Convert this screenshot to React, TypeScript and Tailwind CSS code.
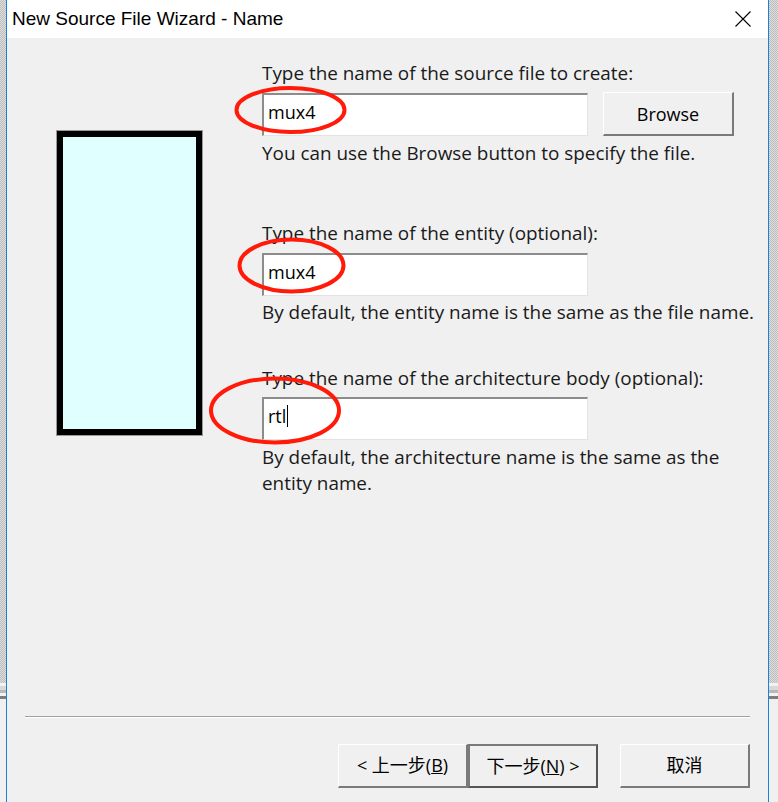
import React from "react";

const font = { fontFamily: '"Open Sans", "Noto Sans CJK SC", sans-serif' };
const titleFont = { fontFamily: '"Liberation Sans", sans-serif' };

const Field = ({ value, caret }: { value: string; caret?: boolean }) => (
  <div className="w-[326px] h-[43px] bg-white border-t-2 border-l-2 border-t-[#8c8c8c] border-l-[#8c8c8c] border-b border-r border-b-[#e3e3e3] border-r-[#e3e3e3] flex items-center pl-[4px] pb-[6px] text-[18px] text-black">
    <span>{value}</span>
    {caret && <span className="w-px h-[22px] bg-black ml-px" />}
  </div>
);

const Button = ({ children, strong, className = "" }: { children: React.ReactNode; strong?: boolean; className?: string }) => (
  <div
    className={
      "h-[44px] w-[130px] flex items-center justify-center bg-[#f0f0f0] text-[18px] text-black " +
      (strong
        ? "border-2 border-t-[#7a7a7a] border-l-[#7a7a7a] border-b-[#555] border-r-[#555] "
        : "border-t border-l border-t-white border-l-white border-b-2 border-r-2 border-b-[#7a7a7a] border-r-[#7a7a7a] ") +
      className
    }
  >
    {children}
  </div>
);

const Strip = ({ w }: { w: string }) => (
  <div className={"h-full flex flex-col bg-[repeating-conic-gradient(#bdbdbd_0_25%,#dedede_0_50%)] bg-[length:2px_2px] " + w}>
    <div className="h-[683px]" />
    <div className="h-[3px] bg-[#f3f3f3]" />
    <div className="h-[4px] bg-[#d8d8d8]" />
    <div className="h-[3px] bg-[#b8b8b8]" />
    <div className="h-[3px] bg-[#f3f3f3]" />
    <div className="h-[3px] bg-[#7d7d7d]" />
    <div className="flex-1 bg-[#f0f0f0]" />
  </div>
);

export default function App() {
  return (
    <div className="relative w-[778px] h-[802px] flex overflow-hidden" style={font}>
      <Strip w="w-[6px]" />
      <div className="w-[763px] h-full flex flex-col border-l border-r border-[#1883d7] bg-[#f0f0f0]">
        <div className="h-[38px] bg-white flex items-center justify-between pl-[5px] pr-[17px]">
          <span className="text-[19px] text-black" style={titleFont}>New Source File Wizard - Name</span>
          <svg width="16" height="16" viewBox="0 0 16 16" className="text-black">
            <path d="M0.5 0.5 L15.5 15.5 M15.5 0.5 L0.5 15.5" stroke="currentColor" strokeWidth="1.1" fill="none" />
          </svg>
        </div>

        <div className="flex-1 flex flex-col">
          <div className="flex pl-[50px] pt-[23px] h-[678px]">
            <div className="mt-[70px] w-[145px] h-[304px] border-[6px] border-black bg-[#e0ffff] outline outline-1 outline-[#9a9a9a]" />
            <div className="ml-[60px] flex flex-col text-[18.9px] leading-[26px] text-[#1a1a1a]">
              <div className="h-[24px] leading-[24px]">Type the name of the source file to create:</div>
              <div className="mt-[7px] flex items-center gap-[15px]">
                <Field value="mux4" />
                <div className="h-[44px] w-[131px] flex items-center justify-center bg-[#f0f0f0] border-t border-l border-t-white border-l-white border-b-2 border-r-2 border-b-[#7a7a7a] border-r-[#7a7a7a] text-[18px] text-black">
                  Browse
                </div>
              </div>
              <div className="mt-[5px] h-[24px] leading-[24px]">You can use the Browse button to specify the file.</div>

              <div className="mt-[56px] h-[24px] leading-[24px]">Type the name of the entity (optional):</div>
              <div className="mt-[8px]">
                <Field value="mux4" />
              </div>
              <div className="mt-[4px] h-[24px] leading-[24px] whitespace-nowrap">By default, the entity name is the same as the file name.</div>

              <div className="mt-[42px] h-[24px] leading-[24px]">Type the name of the architecture body (optional):</div>
              <div className="mt-[7px]">
                <Field value="rtl" caret />
              </div>
              <div className="mt-[4px] w-[470px] leading-[26px]">
                By default, the architecture name is the same as the entity name.
              </div>
            </div>
          </div>

          <div className="mx-[18px] h-[2px] border-t border-t-[#a0a0a0] border-b border-b-white" />

          <div className="flex justify-end pr-[18px] pt-[26px]">
            <Button>&lt; 上一步(<span className="underline">B</span>)</Button>
            <Button strong>下一步(<span className="underline">N</span>) &gt;</Button>
            <Button className="ml-[22px]">取消</Button>
          </div>
        </div>
      </div>
      <Strip w="w-[9px]" />

      <svg className="absolute left-0 top-0 pointer-events-none" width="778" height="802">
        <ellipse cx="290.5" cy="110" rx="54" ry="22" stroke="#ff1a0a" strokeWidth="4" fill="none" />
        <ellipse cx="291.5" cy="265.5" rx="52" ry="26" stroke="#ff1a0a" strokeWidth="4" fill="none" />
        <ellipse cx="275" cy="410.5" rx="64" ry="32" stroke="#ff1a0a" strokeWidth="4" fill="none" />
      </svg>
    </div>
  );
}
